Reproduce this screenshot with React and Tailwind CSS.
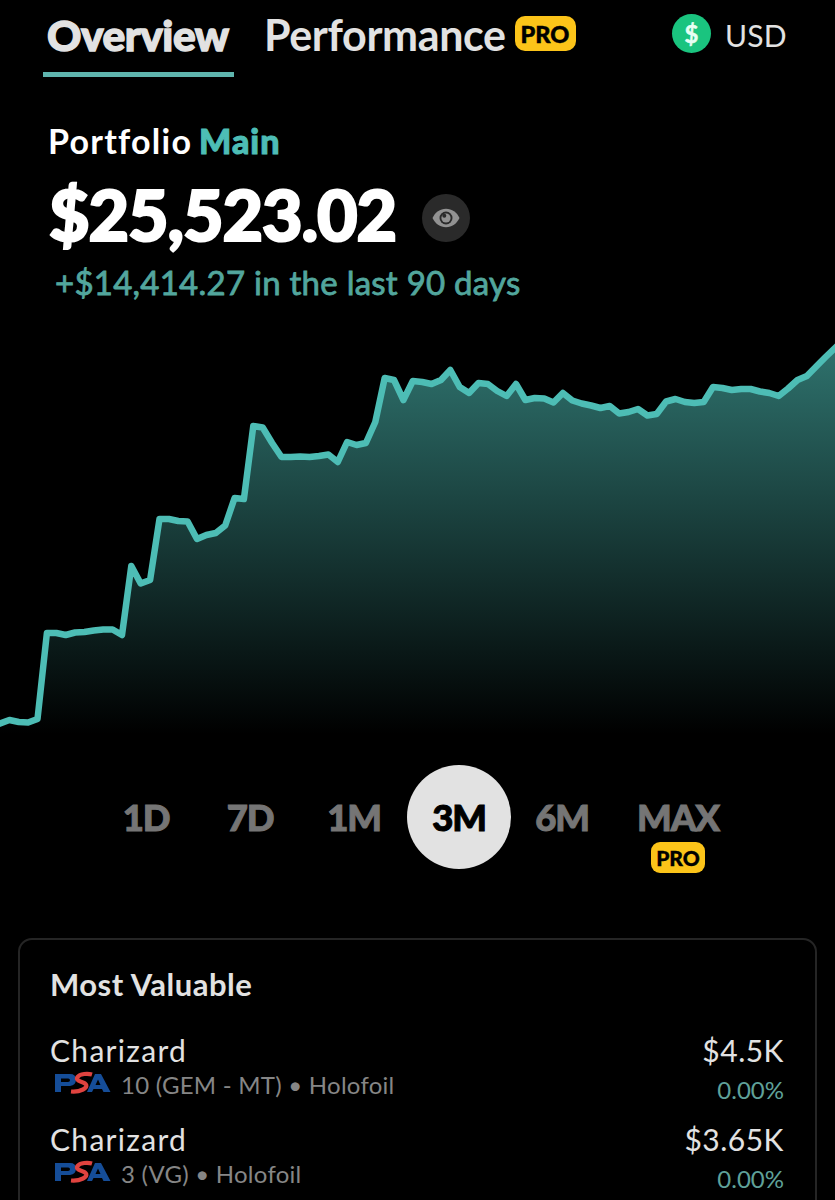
import React from 'react';

const SERIES = [
  723.5, 720, 722, 722.5, 719, 633, 633, 635, 632.5, 632, 630.5, 629.5, 629.5, 635, 566, 583.5, 580, 519, 519, 521,
  521.5, 539, 535, 533, 525.5, 498, 499, 426, 427.5, 443, 457, 457, 456.5, 457, 456, 454.5, 462, 442, 445, 443,
  422, 378, 380, 400, 381, 382, 384, 380, 370, 387, 393, 383, 384, 391, 396, 384, 400, 398, 398.5, 402.5,
  393, 400.5, 403.5, 405.5, 408, 406, 413.5, 412, 409, 415.5, 414, 401.5, 399, 402, 403, 402, 387, 388, 390, 389,
  389, 391.5, 393, 396, 388.5, 380, 376, 366.5, 357, 348,
];
const CHART_TOP = 310;
const POINTS = SERIES.map((y, i) => `${((i * 835) / 89).toFixed(1)},${y - CHART_TOP}`).join(' ');

const RANGES = [
  { label: '1D', box: 'w-[104px]' },
  { label: '7D', box: 'w-[104px]' },
  { label: '1M', box: 'w-[104px]' },
  { label: '3M', box: 'w-[104px]', active: true },
  { label: '6M', box: 'w-[104px]' },
  { label: 'MAX', box: 'w-[128px]', pro: true },
];

const CARDS = [
  { name: 'Charizard', grade: '10 (GEM - MT)', finish: 'Holofoil', price: '$4.5K', change: '0.00%' },
  { name: 'Charizard', grade: '3 (VG)', finish: 'Holofoil', price: '$3.65K', change: '0.00%' },
];

function Chart() {
  return (
    <svg className="block shrink-0" width="835" height="430" viewBox="0 0 835 430">
      <defs>
        <linearGradient id="area" gradientUnits="userSpaceOnUse" x1="0" y1="38" x2="0" y2="424">
          <stop offset="0" stopColor="#4dbdb5" stopOpacity="0.6" />
          <stop offset="1" stopColor="#4dbdb5" stopOpacity="0" />
        </linearGradient>
      </defs>
      <polygon points={`0,430 ${POINTS} 835,430`} fill="url(#area)" />
      <polyline points={POINTS} fill="none" stroke="#4dbdb5" strokeWidth="6.5" strokeLinejoin="round" strokeLinecap="square" />
    </svg>
  );
}

function EyeIcon() {
  return (
    <svg width="28" height="20" viewBox="0 0 28 20">
      <path d="M0.5 10C3.2 4.300 8 0.800 14 0.800S24.800 4.300 27.500 10C24.800 15.700 20 19.200 14 19.200S3.200 15.700 0.500 10Z" fill="#929292" />
      <circle cx="14" cy="10" r="6.500" fill="#2a2a2a" />
      <circle cx="14" cy="10" r="4.600" fill="#929292" />
      <circle cx="12.300" cy="7.800" r="2" fill="#2a2a2a" />
    </svg>
  );
}

function PsaLogo() {
  return (
    <svg width="57" height="24" viewBox="0 0 57 24">
      <path fillRule="evenodd" fill="#154d98" d="M1 3H16Q22 3 22 8.500T16 15H7V21H1ZM7 7.500V11H14Q16 11 16 9.200T14 7.500Z" />
      <path fillRule="evenodd" fill="#154d98" d="M33 21L41 3H47L56.500 21H49.500L48 18H39.500L38 21ZM41.500 14H46.500L44 8.500Z" />
      <path
        d="M38 3.500C34 2.300 26 2.500 23.500 6C21.500 9 26 10.500 29 11.500C34 13.500 33 16.500 29 18.500C25 20.500 20 20.800 17 20.500"
        fill="none" stroke="#e0433f" strokeWidth="4.200"
      />
    </svg>
  );
}

export default function App() {
  return (
    <div className="flex h-[1200px] w-[835px] flex-col overflow-hidden bg-black font-['Lato',sans-serif] whitespace-nowrap text-[#e2e2e2]">
      <header className="flex h-[77px] shrink-0 items-start pl-[43px]">
        <div className="h-[77px] w-[191px] border-b-[5px] border-[#5fb5ae] pt-[13px] pl-[4px]">
          <span className="text-[42.5px] leading-[44px] font-black tracking-[-0.5px] [-webkit-text-stroke:1.3px_#e2e2e2]">Overview</span>
        </div>
        <span className="mt-[13px] ml-[30px] w-[251px] text-[43px] leading-[44px] font-bold tracking-[-0.35px]">Performance</span>
        <span className="mt-4 flex h-[35px] w-[61px] items-center justify-center rounded-[10px] bg-[#fcc419] pr-px text-[23.5px] leading-6 font-black text-black [-webkit-text-stroke:0.5px_black]">PRO</span>
        <span className="mt-[14px] ml-[96px] flex size-[39px] items-center justify-center rounded-full bg-[#1ac47f] text-[24px] leading-none font-bold text-[#e6fff4] [-webkit-text-stroke:0.5px_#e6fff4]">$</span>
        <span className="mt-[17px] ml-[14px] text-[30px] leading-9 tracking-[0.2px]">USD</span>
      </header>

      <section className="flex h-[233px] shrink-0 flex-col pl-[48px]">
        <div className="mt-[44px] flex h-10 gap-[8px] text-[34px] leading-10">
          <span className="w-[143px] font-bold tracking-[1.25px] text-white">Portfolio</span>
          <span className="font-black tracking-[1px] text-[#4dbdb5] [-webkit-text-stroke:1px_#4dbdb5]">Main</span>
        </div>
        <div className="mt-[12px] flex h-[84px] items-center">
          <span className="mt-[-3px] w-[374px] pl-px text-[70px] leading-[84px] font-black tracking-[-1.1px] text-white [-webkit-text-stroke:2.200px_white]">$25,523.02</span>
          <span className="mb-[-6px] flex size-12 items-center justify-center rounded-full bg-[#2a2a2a]">
            <EyeIcon />
          </span>
        </div>
        <div className="mt-[8px] pl-[7px] text-[33px] leading-[34px] font-normal tracking-[0.25px] text-[#52a69d] [-webkit-text-stroke:0.8px_#52a69d]">+$14,414.27 in the last 90 days</div>
      </section>

      <Chart />

      <nav className="mt-[25px] flex h-[108px] shrink-0 pl-[95px]">
        {RANGES.map((r) => (
          <div key={r.label} className={`flex flex-col items-center ${r.box}`}>
            <span
              className={
                r.active
                  ? 'flex size-[104px] items-center justify-center rounded-full bg-[#e2e2e2] pt-px text-[36.5px] leading-none font-black tracking-[-1.1px] text-black [-webkit-text-stroke:1px_black]'
                  : 'flex h-[104px] items-center pt-px pr-[2px] text-[36.5px] leading-none font-black tracking-[-1.1px] text-[#757575] [-webkit-text-stroke:1px_#757575]'
              }
            >
              {r.label}
            </span>
            {r.pro && (
              <span className="mt-[-27px] mr-[2px] flex h-[31px] w-[54px] shrink-0 items-center justify-center rounded-[9px] bg-[#fcc419] pb-px text-[21px] leading-none font-black text-black [-webkit-text-stroke:0.4px_black]">PRO</span>
            )}
          </div>
        ))}
      </nav>

      <section className="mx-[18px] mt-[65px] h-[300px] shrink-0 rounded-[14px] border-2 border-[#252525] pt-[24px] pr-[31px] pl-[30px]">
        <h2 className="text-[31px] leading-10 font-bold tracking-[0.5px]">Most Valuable</h2>
        <div className="mt-[28px] flex flex-col">
          {CARDS.map((c) => (
            <div key={c.price} className="flex h-[89px] justify-between">
              <div>
                <div className="text-[30px] leading-9 tracking-[1.3px]">{c.name}</div>
                <div className="mt-px flex h-[32px] items-center pl-[4px] text-[24px] leading-8 tracking-[0.25px] text-[#868686]">
                  <span className="mr-[10px] mb-[5px]"><PsaLogo /></span>
                  {c.grade} • {c.finish}
                </div>
              </div>
              <div className="text-right">
                <div className="text-[30px] leading-9 tracking-[0.5px]">{c.price}</div>
                <div className="mt-[6px] text-[24px] leading-8 text-[#5fa199]">{c.change}</div>
              </div>
            </div>
          ))}
        </div>
      </section>
    </div>
  );
}
